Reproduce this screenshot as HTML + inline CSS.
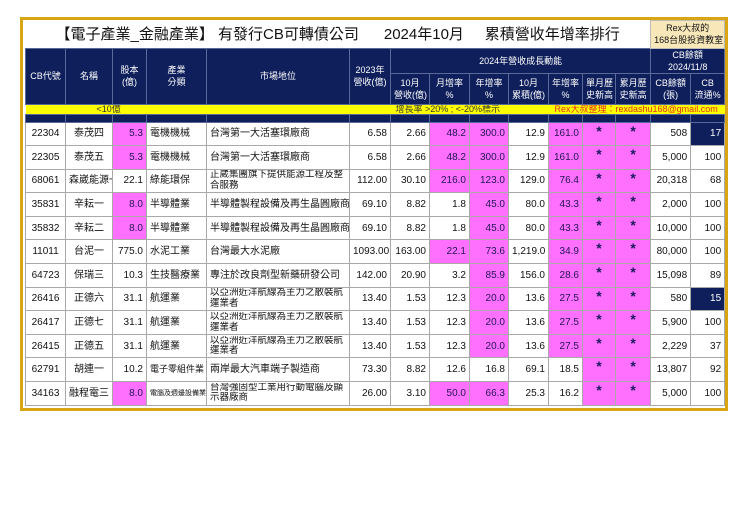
<!DOCTYPE html>
<html><head><meta charset="utf-8"><style>
body{margin:0;background:#fff;width:740px;height:523px;position:relative;font-family:"Liberation Sans","Noto Sans CJK TC",sans-serif;}
#frame{position:absolute;left:20px;top:17px;width:702px;height:388px;border:3px solid #d9a514;background:#fff;overflow:hidden}
table{position:absolute;left:2px;top:0;border-collapse:collapse;table-layout:fixed;width:699px;}
td{padding:0 3px;overflow:hidden;white-space:nowrap;font-size:10px;line-height:11px;color:#111;border:1px solid #a9a9a9;}
.t td{border:none;}
.h td{background:#0e1f5b;color:#fff;text-align:center;font-size:9px;line-height:12px;border:1px solid #5a6a98;}
.n td{background:#0e1f5b;border:1px solid #5a6a98;}
.d td{height:20.6px;text-align:right;}
.c{text-align:center!important}
.l{text-align:left!important}
.m{background:#ff70ff;color:#231550!important}
.s{color:#1a1a5e!important;font-size:14px!important;font-weight:bold;text-align:center!important;vertical-align:top;line-height:12px!important;padding-top:2px!important}
.b{background:#0e1f5b;color:#fff!important}
.wd{height:21px;overflow:hidden;white-space:normal;line-height:10.5px;font-size:9.5px;text-align:left}
.yb{position:relative;height:9px;background:#ffff00;font-size:9px;line-height:9px;color:#333}
.yb span{position:absolute;top:0;white-space:nowrap}
</style></head><body>
<div id="frame">
<table>
<colgroup><col style="width:40px"><col style="width:47px"><col style="width:34px"><col style="width:60px"><col style="width:143px"><col style="width:41px"><col style="width:39px"><col style="width:40px"><col style="width:39px"><col style="width:40px"><col style="width:34px"><col style="width:33px"><col style="width:35px"><col style="width:40px"><col style="width:34px"></colgroup>
<tr class="t"><td colspan="13" style="height:27px;font-size:15px;padding-left:30px;color:#111">【電子產業_金融產業】 有發行CB可轉債公司 &nbsp; &nbsp; &nbsp;2024年10月 &nbsp; &nbsp; 累積營收年增率排行</td><td colspan="2" style="background:#f7e7b9;text-align:center;font-size:9px;line-height:12px;border:1px solid #bbb">Rex大叔的<br>168台股投資教室</td></tr>
<tr class="h"><td rowspan="2">CB代號</td><td rowspan="2">名稱</td><td rowspan="2">股本<br>(億)</td><td rowspan="2">產業<br>分類</td><td rowspan="2">市場地位</td><td rowspan="2">2023年<br>營收(億)</td><td colspan="7" style="height:21px">2024年營收成長動能</td><td colspan="2">CB餘額<br>2024/11/8</td></tr>
<tr class="h"><td style="height:30px">10月<br>營收(億)</td><td>月增率<br>%</td><td>年增率<br>%</td><td>10月<br>累積(億)</td><td>年增率<br>%</td><td>單月歷<br>史新高</td><td>累月歷<br>史新高</td><td>CB餘額<br>(張)</td><td>CB<br>流通%</td></tr>
<tr><td colspan="15" style="padding:0;border:none"><div class="yb"><span style="left:71px">&lt;10億</span><span style="left:370px">增長率 &gt;20% ; &lt;-20%標示</span><span style="left:529px;color:#e0301e">Rex大叔整理：rexdashu168@gmail.com</span></div></td></tr>
<tr class="n"><td style="height:7px;padding:0"></td><td></td><td></td><td></td><td></td><td></td><td></td><td></td><td></td><td></td><td></td><td></td><td></td><td></td><td></td></tr>
<tr class="d"><td class="c">22304</td><td class="c">泰茂四</td><td class="m">5.3</td><td class="l">電機機械</td><td class="l">台灣第一大活塞環廠商</td><td>6.58</td><td>2.66</td><td class="m">48.2</td><td class="m">300.0</td><td>12.9</td><td class="m">161.0</td><td class="m s">*</td><td class="m s">*</td><td>508</td><td class="b">17</td></tr>
<tr class="d"><td class="c">22305</td><td class="c">泰茂五</td><td class="m">5.3</td><td class="l">電機機械</td><td class="l">台灣第一大活塞環廠商</td><td>6.58</td><td>2.66</td><td class="m">48.2</td><td class="m">300.0</td><td>12.9</td><td class="m">161.0</td><td class="m s">*</td><td class="m s">*</td><td>5,000</td><td>100</td></tr>
<tr class="d"><td class="c">68061</td><td class="c">森崴能源一</td><td>22.1</td><td class="l">綠能環保</td><td><div class="wd">正崴集團旗下提供能源工程及整合服務</div></td><td>112.00</td><td>30.10</td><td class="m">216.0</td><td class="m">123.0</td><td>129.0</td><td class="m">76.4</td><td class="m s">*</td><td class="m s">*</td><td>20,318</td><td>68</td></tr>
<tr class="d"><td class="c">35831</td><td class="c">辛耘一</td><td class="m">8.0</td><td class="l">半導體業</td><td class="l">半導體製程設備及再生晶圓廠商</td><td>69.10</td><td>8.82</td><td>1.8</td><td class="m">45.0</td><td>80.0</td><td class="m">43.3</td><td class="m s">*</td><td class="m s">*</td><td>2,000</td><td>100</td></tr>
<tr class="d"><td class="c">35832</td><td class="c">辛耘二</td><td class="m">8.0</td><td class="l">半導體業</td><td class="l">半導體製程設備及再生晶圓廠商</td><td>69.10</td><td>8.82</td><td>1.8</td><td class="m">45.0</td><td>80.0</td><td class="m">43.3</td><td class="m s">*</td><td class="m s">*</td><td>10,000</td><td>100</td></tr>
<tr class="d"><td class="c">11011</td><td class="c">台泥一</td><td>775.0</td><td class="l">水泥工業</td><td class="l">台灣最大水泥廠</td><td>1093.00</td><td>163.00</td><td class="m">22.1</td><td class="m">73.6</td><td>1,219.0</td><td class="m">34.9</td><td class="m s">*</td><td class="m s">*</td><td>80,000</td><td>100</td></tr>
<tr class="d"><td class="c">64723</td><td class="c">保瑞三</td><td>10.3</td><td class="l">生技醫療業</td><td class="l">專注於改良劑型新藥研發公司</td><td>142.00</td><td>20.90</td><td>3.2</td><td class="m">85.9</td><td>156.0</td><td class="m">28.6</td><td class="m s">*</td><td class="m s">*</td><td>15,098</td><td>89</td></tr>
<tr class="d"><td class="c">26416</td><td class="c">正德六</td><td>31.1</td><td class="l">航運業</td><td><div class="wd">以亞洲近洋航線為主力之散裝航運業者</div></td><td>13.40</td><td>1.53</td><td>12.3</td><td class="m">20.0</td><td>13.6</td><td class="m">27.5</td><td class="m s">*</td><td class="m s">*</td><td>580</td><td class="b">15</td></tr>
<tr class="d"><td class="c">26417</td><td class="c">正德七</td><td>31.1</td><td class="l">航運業</td><td><div class="wd">以亞洲近洋航線為主力之散裝航運業者</div></td><td>13.40</td><td>1.53</td><td>12.3</td><td class="m">20.0</td><td>13.6</td><td class="m">27.5</td><td class="m s">*</td><td class="m s">*</td><td>5,900</td><td>100</td></tr>
<tr class="d"><td class="c">26415</td><td class="c">正德五</td><td>31.1</td><td class="l">航運業</td><td><div class="wd">以亞洲近洋航線為主力之散裝航運業者</div></td><td>13.40</td><td>1.53</td><td>12.3</td><td class="m">20.0</td><td>13.6</td><td class="m">27.5</td><td class="m s">*</td><td class="m s">*</td><td>2,229</td><td>37</td></tr>
<tr class="d"><td class="c">62791</td><td class="c">胡連一</td><td>10.2</td><td class="l" style="font-size:9px">電子零組件業</td><td class="l">兩岸最大汽車端子製造商</td><td>73.30</td><td>8.82</td><td>12.6</td><td>16.8</td><td>69.1</td><td>18.5</td><td class="m s">*</td><td class="m s">*</td><td>13,807</td><td>92</td></tr>
<tr class="d"><td class="c">34163</td><td class="c">融程電三</td><td class="m">8.0</td><td class="l" style="font-size:7px">電腦及週邊設備業</td><td><div class="wd">台灣強固型工業用行動電腦及顯示器廠商</div></td><td>26.00</td><td>3.10</td><td class="m">50.0</td><td class="m">66.3</td><td>25.3</td><td>16.2</td><td class="m s">*</td><td class="m s">*</td><td>5,000</td><td>100</td></tr>
</table>
</div>
</body></html>
